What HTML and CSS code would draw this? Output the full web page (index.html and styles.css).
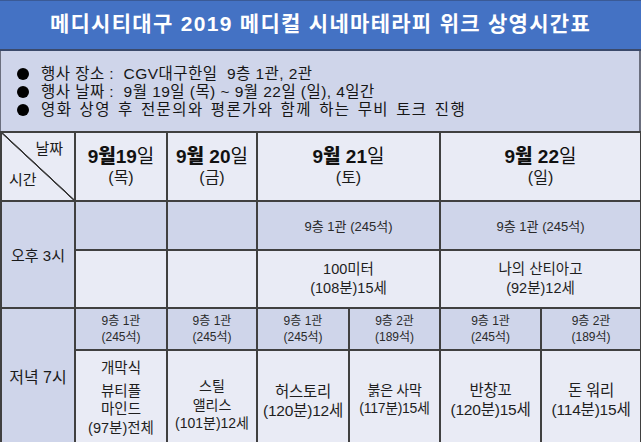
FILE: index.html
```html
<!DOCTYPE html>
<html lang="ko">
<head>
<meta charset="utf-8">
<link rel="stylesheet" href="styles.css">
</head>
<body>
<div class="page">
  <header class="title-bar">
    <h1 class="title">메디시티대구 2019 메디컬 시네마테라피 위크 상영시간표</h1>
  </header>
  <section class="info">
    <ul class="info-list">
      <li class="info-item"><span class="dot"></span><span class="info-text">행사 장소 :&nbsp; CGV대구한일&nbsp; 9층 1관, 2관</span></li>
      <li class="info-item"><span class="dot"></span><span class="info-text">행사 날짜 :&nbsp; 9월 19일 (목) ~ 9월 22일 (일), 4일간</span></li>
      <li class="info-item"><span class="dot"></span><span class="info-text spaced">영화 상영 후 전문의와 평론가와 함께 하는 무비 토크 진행</span></li>
    </ul>
  </section>
  <table class="schedule">
    <colgroup>
      <col class="c-time"><col class="c-d19"><col class="c-d20"><col class="c-d21a"><col class="c-d21b"><col class="c-d22a"><col class="c-d22b">
    </colgroup>
    <tr class="r-head">
      <th class="corner"><span class="corner-date">날짜</span><span class="corner-time">시간</span></th>
      <th class="day"><div class="day-line"><b>9월19</b>일</div><div class="weekday">(목)</div></th>
      <th class="day"><div class="day-line"><b>9월 20</b>일</div><div class="weekday">(금)</div></th>
      <th class="day" colspan="2"><div class="day-line"><b>9월 21</b>일</div><div class="weekday">(토)</div></th>
      <th class="day" colspan="2"><div class="day-line"><b>9월 22</b>일</div><div class="weekday">(일)</div></th>
    </tr>
    <tr class="r-1a">
      <td class="time" rowspan="2">오후 3시</td>
      <td class="hall"></td>
      <td class="hall"></td>
      <td class="hall hall-wide" colspan="2">9층 1관 (245석)</td>
      <td class="hall hall-wide" colspan="2">9층 1관 (245석)</td>
    </tr>
    <tr class="r-1b">
      <td class="film"></td>
      <td class="film"></td>
      <td class="film film-md" colspan="2">100미터<br>(108분)15세</td>
      <td class="film film-md" colspan="2">나의 산티아고<br>(92분)12세</td>
    </tr>
    <tr class="r-2a">
      <td class="time time-eve" rowspan="2">저녁 7시</td>
      <td class="hall hall-small">9층 1관<br>(245석)</td>
      <td class="hall hall-small">9층 1관<br>(245석)</td>
      <td class="hall hall-small">9층 1관<br>(245석)</td>
      <td class="hall hall-small">9층 2관<br>(189석)</td>
      <td class="hall hall-small">9층 1관<br>(245석)</td>
      <td class="hall hall-small">9층 2관<br>(189석)</td>
    </tr>
    <tr class="r-2b">
      <td class="film film-top film-open"><div class="opening">개막식</div>뷰티플<br>마인드<br>(97분)전체</td>
      <td class="film film-top film-still">스틸<br>앨리스<br>(101분)12세</td>
      <td class="film film-top film-her">허스토리<br>(120분)12세</td>
      <td class="film film-top film-sm">붉은 사막<br>(117분)15세</td>
      <td class="film film-top film-xl">반창꼬<br>(120분)15세</td>
      <td class="film film-top film-xl">돈 워리<br>(114분)15세</td>
    </tr>
  </table>
</div>
</body>
</html>
```

FILE: styles.css
```css
* { box-sizing: border-box; }
html, body { margin: 0; padding: 0; background: #ffffff; }
body {
  font-family: "Liberation Sans", "Noto Sans CJK KR", sans-serif;
  color: #1a1a1a;
}
.page {
  width: 641px;
  height: 442px;
  overflow: hidden;
  background: #e9ebf5;
}
.title-bar {
  height: 51px;
  background: #4472c4;
  border-top: 1px solid #3a5a96;
  border-bottom: 2px solid #3b4a6b;
  display: flex;
  align-items: center;
  justify-content: center;
}
.title {
  margin: 0;
  color: #ffffff;
  font-size: 21px;
  font-weight: 700;
  letter-spacing: 1.3px;
  line-height: 24px;
  padding-bottom: 3px;
}
.info {
  height: 80px;
  background: #cfd5ea;
  border-left: 1px solid #6b6f7e;
  border-right: 2px solid #6b6f7e;
  padding: 14px 0 0 16px;
}
.info-list {
  list-style: none;
  margin: 0;
  padding: 0;
  font-size: 15.5px;
  line-height: 18px;
  color: #161616;
}
.info-item {
  display: flex;
  align-items: center;
  height: 18px;
}
.dot {
  width: 12px;
  height: 12px;
  border-radius: 50%;
  background: #000;
  margin-right: 12px;
  flex: none;
}
.info-text { letter-spacing: 0.45px; }
.spaced { letter-spacing: 1.4px; word-spacing: 1.5px; }
.schedule {
  width: 640px;
  table-layout: fixed;
  border-collapse: collapse;
  text-align: center;
}
.c-time { width: 74px; }
.c-d19 { width: 92px; }
.c-d20 { width: 90px; }
.c-d21a { width: 92px; }
.c-d21b { width: 91px; }
.c-d22a { width: 101px; }
.c-d22b { width: 100px; }
.schedule th, .schedule td {
  border: 2px solid #404040;
  padding: 0;
  vertical-align: middle;
  font-weight: 400;
}
.r-head { height: 69px; }
.r-1a { height: 49px; }
.r-1b { height: 58px; }
.r-2a { height: 42px; }
.r-2b { height: 93px; }
.corner {
  position: relative;
  background-color: #e9ebf5;
  background-image: linear-gradient(to bottom left, transparent calc(50% - 1px), #3a3a3a calc(50% - 0.5px), #3a3a3a calc(50% + 0.5px), transparent calc(50% + 1px));
  font-size: 15px;
}
.corner-date {
  position: absolute;
  top: 4px;
  right: 11px;
}
.corner-time {
  position: absolute;
  bottom: 11px;
  left: 7px;
}
.day { background: #e9ebf5; }
.day-line {
  font-size: 19px;
  line-height: 22px;
  color: #111;
}
.day-line b { font-weight: 900; }
.weekday {
  font-size: 16px;
  line-height: 20px;
}
.time {
  background: #cfd5ea;
  font-size: 15px;
}
.time-eve { font-size: 16px; padding-bottom: 10px; }
.hall {
  background: #cfd5ea;
  font-size: 13px;
  color: #2a2a2a;
}
.hall-small {
  font-size: 12px;
  line-height: 16px;
}
.film {
  background: #e9ebf5;
  color: #1e1e1e;
}
.schedule td.film-top { vertical-align: top; }
.film-md { font-size: 14.5px; line-height: 19px; padding-bottom: 4px; }
.schedule td.film-open { font-size: 14.5px; line-height: 18.5px; padding-top: 8px; }
.opening { margin-bottom: 4px; }
.schedule td.film-still { font-size: 14px; line-height: 18.5px; padding-top: 26px; }
.schedule td.film-her { font-size: 15.5px; line-height: 19px; padding-top: 31px; letter-spacing: -0.2px; }
.schedule td.film-sm { font-size: 14px; line-height: 18px; padding-top: 30px; letter-spacing: -0.3px; }
.schedule td.film-xl { font-size: 15.5px; line-height: 19px; padding-top: 30px; letter-spacing: -0.2px; }
```
